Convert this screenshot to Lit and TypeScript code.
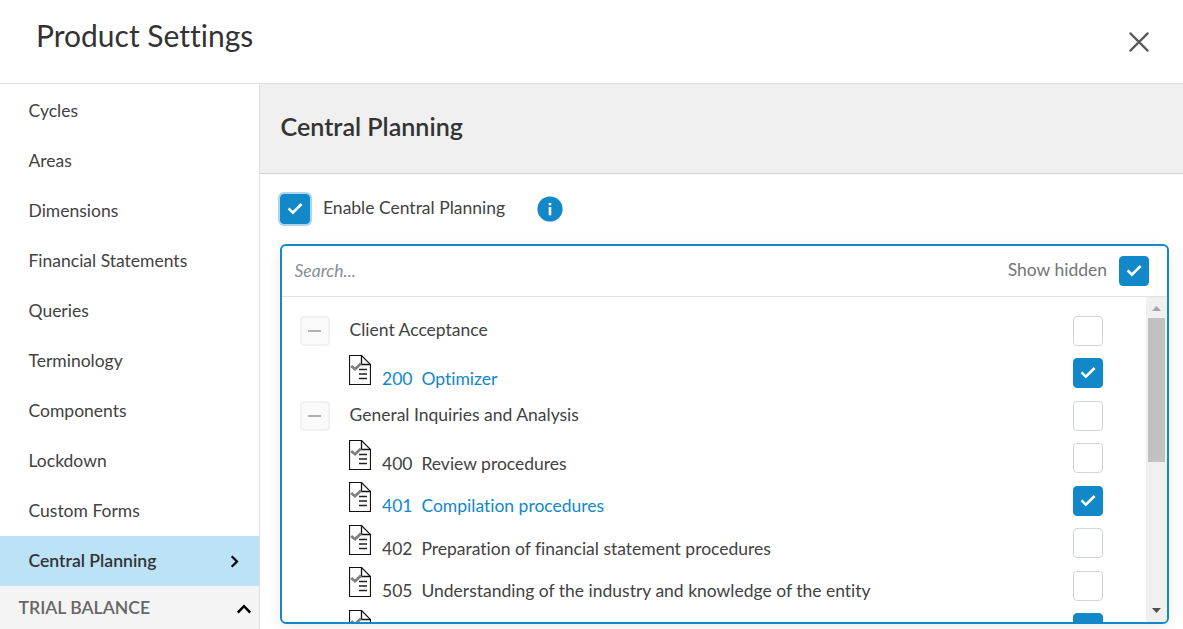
import { LitElement, html, css, svg, nothing } from "lit";
import { customElement, property } from "lit/decorators.js";
import { classMap } from "lit/directives/class-map.js";

@customElement("check-box")
class CheckBox extends LitElement {
  @property({ type: Boolean }) checked = false;
  @property({ type: Boolean }) focused = false;
  static styles = css`
    :host { display: block; flex: none; width: 30px; height: 30px; }
    .box { box-sizing: border-box; width: 30px; height: 30px; border: 1px solid #d0d5dd; border-radius: 4px; background: #fff; }
    .on { background: #1288c9; border-color: #1288c9; }
    .focus { box-shadow: 0 0 0 2px #acd6ee; }
    svg { display: block; margin: -1px; }
  `;
  render() {
    return html`<div class=${classMap({ box: true, on: this.checked, focus: this.focused })}>
      ${this.checked
        ? html`<svg width="30" height="30" viewBox="0 0 30 30"><path d="M8.6 14.4l4.2 4.2L21.6 10" fill="none" stroke="#fff" stroke-width="2.6" /></svg>`
        : nothing}
    </div>`;
  }
}

interface Row { group?: boolean; num?: string; label: string; checked?: boolean; }

const NAV = ["Cycles", "Areas", "Dimensions", "Financial Statements", "Queries", "Terminology", "Components", "Lockdown", "Custom Forms"];

const ROWS: Row[] = [
  { group: true, label: "Client Acceptance" },
  { num: "200", label: "Optimizer", checked: true },
  { group: true, label: "General Inquiries and Analysis" },
  { num: "400", label: "Review procedures" },
  { num: "401", label: "Compilation procedures", checked: true },
  { num: "402", label: "Preparation of financial statement procedures" },
  { num: "505", label: "Understanding of the industry and knowledge of the entity" },
  { num: "", label: "", checked: true },
];

const docIcon = html`<svg class="doc" width="22" height="30" viewBox="0 0 22 30">
  ${svg`<path d="M.5 .5H12.5L21.5 9.5V29.5H.5z" fill="#fff" stroke="#111" stroke-width="1.2"/>
  <path d="M12.5 .5V9.5H21.5" fill="none" stroke="#111" stroke-width="1.3"/>
  <path d="M2.2 11L6 14.2L12 8.4" fill="none" stroke="#808080" stroke-width="2.8"/>
  <path d="M10 14.5H18M10 19H18M10 23.5H18" stroke="#222" stroke-width="1.3"/>`}
</svg>`;

@customElement("app-root")
class AppRoot extends LitElement {
  static styles = css`
    :host { display: flex; flex-direction: column; width: 100%; height: 100vh; overflow: hidden; background: #fff; color: #424242; font: 17.5px/24px Lato, sans-serif; font-variant-ligatures: none; }
    * { box-sizing: border-box; }
    svg { display: block; flex: none; }
    .top { flex: none; height: 84px; border-bottom: 1px solid #e0e0e0; display: flex; justify-content: space-between; padding: 17px 33px 0 36px; }
    h1 { margin: 0; font-size: 30px; line-height: 36px; font-weight: 400; color: #333; }
    .close { margin-top: 14px; }
    .body { flex: 1; min-height: 0; display: flex; }
    nav { flex: none; width: 260px; border-right: 1px solid #e0e0e0; padding-top: 2px; overflow: hidden; }
    .item { height: 50px; display: flex; align-items: center; justify-content: space-between; padding: 0 18px 0 28.5px; }
    .active { background: #bce2f7; font-weight: 600; font-size: 17.6px; color: #333; }
    .section { height: 50px; background: #f4f4f4; color: #666; font-weight: 600; font-size: 17.6px; display: flex; justify-content: space-between; padding: 10px 8px 0 18.5px; }
    .section svg { margin-top: 7px; }
    main { flex: 1; min-width: 0; display: flex; flex-direction: column; }
    .head { flex: none; height: 90px; background: #f0f0f0; border-bottom: 1px solid #d4d4d4; padding: 26px 20.5px 0; }
    h2 { margin: 0; font-size: 25.1px; line-height: 32px; font-weight: 600; color: #333; }
    .enable { flex: none; height: 70px; display: flex; align-items: center; padding-left: 20px; }
    .enable-label { margin: -2px 32px 0 13px; }
    .panel { flex: none; margin-left: 20px; width: 889px; height: 380px; border: 2px solid #1288c9; border-radius: 6px; overflow: hidden; display: flex; flex-direction: column; box-shadow: 0 4px 14px rgba(0,0,0,.08); }
    .search { flex: none; height: 51px; border-bottom: 1px solid #e0e2e4; display: flex; align-items: center; padding: 0 18px 0 12.5px; }
    .ph { flex: 1; font-style: italic; color: #868e96; }
    .hidden { color: #757575; margin: -2px 12px 0 0; }
    .scroll { flex: 1; min-height: 0; display: flex; }
    .list { flex: 1; overflow: hidden; padding: 12.45px 43px 0 18px; }
    .row { height: 42.5px; display: flex; align-items: center; }
    .toggle { flex: none; width: 30px; height: 30px; border: 2px solid #f1f1f1; border-radius: 4px; background: #fafafa; padding: 12px 0 0 6px; }
    .dash { width: 13px; height: 2px; background: #b0b0b0; }
    .text { flex: 1; white-space: pre; }
    .group .text { margin: -1.5px 0 0 19.5px; }
    .leaf { padding-left: 49px; }
    .leaf .text { margin: 11.4px 0 0 11px; }
    .leaf .doc { margin-top: -6.7px; }
    .link .text { color: #1288c9; }
    .bar { flex: none; width: 21px; background: #f0f0f0; display: flex; flex-direction: column; align-items: center; justify-content: space-between; }
    .thumb { width: 17px; height: 144px; background: #c1c1c1; }
    .upper { display: flex; flex-direction: column; }
    .arrow { height: 21px; display: grid; place-items: center; }
    .upper .arrow { padding-top: 2px; }
    .lower { padding-bottom: 2px; }
  `;

  row(r: Row) {
    return html`<div class=${classMap({ row: true, group: !!r.group, leaf: !r.group, link: !r.group && !!r.checked })}>
      ${r.group ? html`<div class="toggle"><div class="dash"></div></div>` : docIcon}
      <span class="text">${r.group ? r.label : `${r.num}  ${r.label}`}</span>
      <check-box ?checked=${!!r.checked}></check-box>
    </div>`;
  }

  render() {
    return html`
      <div class="top">
        <h1>Product Settings</h1>
        <svg class="close" width="22" height="22" viewBox="0 0 22 22"><path d="M2.4 2.4L19.6 19.6M19.6 2.4L2.4 19.6" stroke="#5a5a5a" stroke-width="2.3" stroke-linecap="round" /></svg>
      </div>
      <div class="body">
        <nav>
          ${NAV.map((n) => html`<div class="item">${n}</div>`)}
          <div class="item active">Central Planning
            <svg width="12" height="14" viewBox="0 0 12 14"><path d="M2.7 2.2L8 7.5L2.7 12.8" fill="none" stroke="#000" stroke-width="2.2" /></svg>
          </div>
          <div class="section">TRIAL BALANCE
            <svg width="14" height="12" viewBox="0 0 14 12"><path d="M.8 9.5L7 3.2L13.2 9.5" fill="none" stroke="#000" stroke-width="2.5" /></svg>
          </div>
        </nav>
        <main>
          <div class="head"><h2>Central Planning</h2></div>
          <div class="enable">
            <check-box checked focused></check-box>
            <span class="enable-label">Enable Central Planning</span>
            <svg width="26" height="26" viewBox="0 0 26 26"><circle cx="13" cy="13" r="12.6" fill="#1288c9" /><path d="M11.7 7h2.6v2.2h-2.6zM11.7 11h2.6v8.3h-2.6z" fill="#fff" /></svg>
          </div>
          <div class="panel">
            <div class="search">
              <span class="ph">Search...</span>
              <span class="hidden">Show hidden</span>
              <check-box checked></check-box>
            </div>
            <div class="scroll">
              <div class="list">${ROWS.map((r) => this.row(r))}</div>
              <div class="bar">
                <div class="upper">
                  <div class="arrow"><svg width="9" height="5" viewBox="0 0 9 5"><path d="M4.5 0L9 5H0z" fill="#a3a3a3" /></svg></div>
                  <div class="thumb"></div>
                </div>
                <div class="arrow lower"><svg width="9" height="5" viewBox="0 0 9 5"><path d="M0 0H9L4.5 5z" fill="#505050" /></svg></div>
              </div>
            </div>
          </div>
        </main>
      </div>`;
  }
}
